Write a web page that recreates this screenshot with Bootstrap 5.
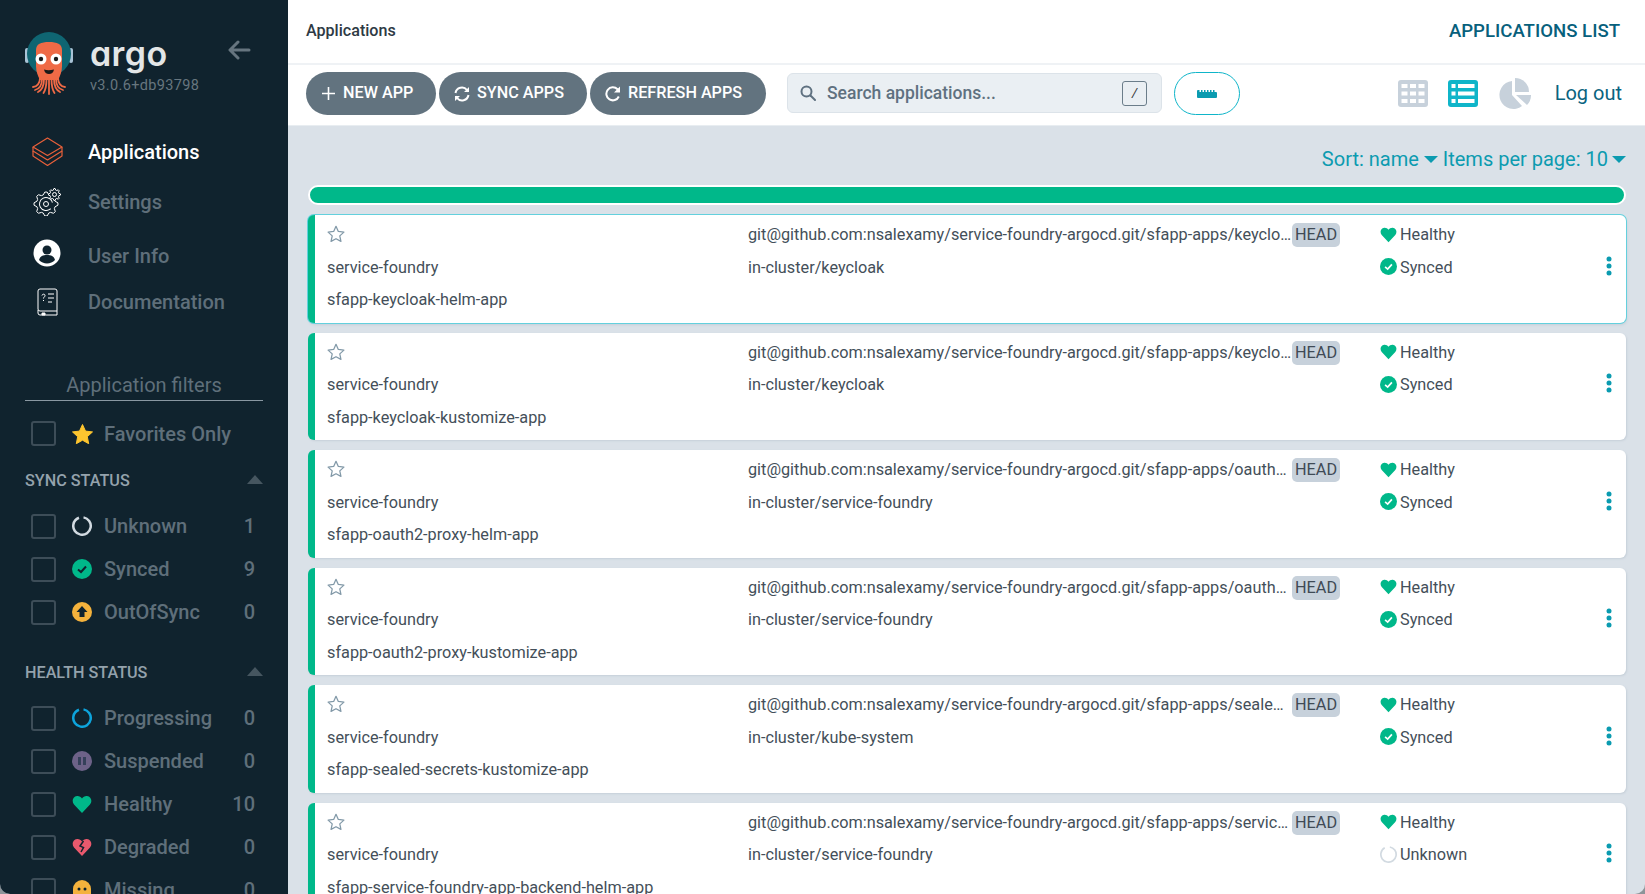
<!DOCTYPE html>
<html lang="en">
<head>
  <meta charset="UTF-8" />
  <title>Applications</title>
  <link href="https://cdn.jsdelivr.net/npm/bootstrap@5.3.0/dist/css/bootstrap.min.css" rel="stylesheet">
  <style>
    html, body { height: 100%; overflow: hidden; background: #8d9499; }
    body { font-family: Roboto, "Liberation Sans", sans-serif; color: #444f59; }
    .app { height: 894px; border-radius: 0 0 10px 10px; overflow: hidden; background: #dae1e8; }

    /* sidebar */
    .side { width: 288px; background: #10232e; padding-left: 25px; padding-right: 25px; }
    .brand { height: 127px; padding-top: 32px; }
    .wordmark { font-family: Inter, sans-serif; font-feature-settings: "cv11"; font-weight: 600; font-size: 34px; line-height: 34px; color: #e3e6e7; margin-top: 5px; height: 40px; letter-spacing: .4px; }
    .version { font-size: 14.5px; line-height: 18px; color: #67767f; letter-spacing: .35px; }
    .brand-text { margin-left: 17px; }
    .back { margin-left: 29px; margin-top: 8px; }
    .side-link { height: 50px; font-size: 20px; font-weight: 500; color: #5f6f7a; }
    .side-link.active { color: #fff; }
    .side-link .ico { width: 44px; margin-right: 19px; }
    .side-link.shift-down { margin-top: 4px; }
    .side-link.shift-down svg { margin-bottom: 6px; }
    .side-link.shift-up { margin-top: -4px; }
    .filters-title { margin-top: 39px; height: 35px; font-size: 20px; line-height: 38px; color: #5f6f7a; border-bottom: 1px solid #8a98a2; text-align: center; }
    .filter-head { height: 24px; font-size: 16.2px; font-weight: 500; color: #94a2ac; }
    .filter-head svg { margin-bottom: 3px; }
    .filter-row { height: 43px; font-size: 20px; font-weight: 500; color: #5f6f7a; padding-left: 6px; padding-right: 8px; }
    .filter-row .form-check-input { width: 25px; height: 25px; margin: 0 16px 0 0; background-color: transparent; border: 2px solid #3d4d58; border-radius: 3px; flex: none; }
    .filter-row svg { margin-right: 12px; flex: none; }
    #fav-row svg { margin-right: 11px; }
    #fav-row { margin-top: 11px; }
    #sync-head { margin-top: 14px; }
    #sync-rows, #health-rows { margin-top: 11.5px; }
    #health-head { margin-top: 27.5px; }

    /* header */
    .topbar { height: 65px; background: #fff; border-bottom: 2px solid #eff2f5; padding: 0 25px 0 18px; }
    .crumb { font-size: 16.1px; font-weight: 500; color: #2e3a44; }
    .page-name { font-size: 18.6px; font-weight: 500; color: #07607c; }
    .toolbar { height: 61px; background: #fff; border-bottom: 1px solid #e8edf1; padding: 0 23px 4px 18px; }
    .btn-argo { height: 43px; border-radius: 22px; border: 0; background: #62737f; color: #fff; font-size: 16.2px; font-weight: 500; padding: 0 0 0 15px; margin-right: 3px; text-align: left; white-space: nowrap; flex: none; }
    .btn-argo:hover { background: #62737f; color: #fff; }
    .btn-argo svg { margin-right: 7px; }
    .btn-argo.new { width: 130px; }
    .btn-argo.sync { width: 148px; }
    .btn-argo.refresh { width: 176px; margin-right: 0; }
    .search { width: 375px; height: 40px; margin-left: 21px; background: #eaeff3; border: 1px solid #dce3e9; border-radius: 6px; padding: 0 14px 0 12px; flex: none; }
    .search .form-control { background: transparent; border: 0; box-shadow: none; padding: 0 0 0 11px; font-size: 17.5px; font-weight: 500; color: #5f7180; }
    .search .form-control::placeholder { color: #5f7180; opacity: 1; }
    .key { width: 25px; height: 25px; border: 1px solid #6b7d8a; border-radius: 3px; font-size: 13px; font-style: italic; color: #333; flex: none; }
    .btn-ruler { width: 66px; height: 43px; margin-left: 12px; border: 1px solid #0fb5c9; border-radius: 22px; background: #fff; padding: 0; flex: none; }
    .view-ico { margin-right: 20px; }
    .logout { font-size: 20px; color: #0a6480; margin-left: 24px; }

    /* list */
    .content { padding: 0 19px 0 20px; }
    .sorter { height: 59px; padding-top: 21px; font-size: 20px; line-height: 24px; color: #0c9bb0; }
    .caret { display: inline-block; border: 7px solid transparent; border-top-color: #0c9bb0; border-bottom-width: 0; vertical-align: 3px; margin: 0 0 0 5px; }
    .caret.last { margin-left: 4px; }
    .bar { height: 20px; background: #00b88a; border: 2px solid #fff; border-radius: 10px; margin-bottom: 10px; }
    .app-card { height: 107.5px; margin-bottom: 10px; background: #fff; border: 0; border-left: 7px solid #00b88a; border-radius: 6px; box-shadow: 1px 1px 2px #c6d0d9; padding: 4px 0 0 12px; font-size: 16.25px; color: #444f59; }
    .app-card.selected { box-shadow: 0 0 0 1px #63d0dd, 1px 2px 3px #c6d0d9; }
    .app-line { height: 32.5px; }
    .col-name { width: 421px; flex: none; }
    .col-name svg { margin-bottom: 2px; }
    .col-repo { width: 632px; flex: none; }
    .repo-text { width: 544px; flex: none; }
    .chip { background: #c7d1db; border-radius: 5px; padding: 0 3px; height: 24px; line-height: 24px; flex: none; color: #3f4a55; }
    .col-state svg { margin-right: 3px; margin-bottom: 2px; flex: none; }
    .kebab { right: 14px; top: 38px; }
  </style>
</head>
<body>
  <div class="app d-flex">
    <aside class="side flex-shrink-0">
      <div class="brand d-flex">
        <svg width="48" height="64" viewBox="0 0 48 64" class="flex-shrink-0">
          <rect x="0" y="16" width="4" height="15" rx="2" fill="#a9c3d6"/>
          <rect x="44" y="16" width="4" height="15" rx="2" fill="#a9c3d6"/>
          <circle cx="24" cy="22" r="22" fill="#0f6572"/>
          <path d="M11 34V18C11 12 16 10 24 10s13 2 13 8v16c0 6-2 10-4 14H15c-2-4-4-8-4-14z" fill="#ef6a46"/>
          <g fill="none" stroke="#ef6a46" stroke-width="1.800" stroke-linecap="round">
            <path d="M15 46c0 5-3 9-7 9"/><path d="M17 47c0 6-3 10-7 11"/><path d="M19 47c0 7-2 11-6 13"/><path d="M21.500 47c0 7-1 11-3 14"/>
            <path d="M33 46c0 5 3 9 7 9"/><path d="M31 47c0 6 3 10 7 11"/><path d="M29 47c0 7 2 11 6 13"/><path d="M26.500 47c0 7 1 11 3 14"/>
            <path d="M24 47v15"/>
          </g>
          <circle cx="16" cy="27" r="5.500" fill="#fff"/><circle cx="31" cy="27" r="5.500" fill="#fff"/>
          <circle cx="16" cy="27" r="2.200" fill="#1a1a1a"/><circle cx="31" cy="27" r="2.200" fill="#1a1a1a"/>
          <path d="M19 37.500c3 1 6 1 10 0-.5 3-2.500 4.500-5 4.500s-4.500-1.500-5-4.500z" fill="#1a1a1a"/>
        </svg>
        <div class="brand-text">
          <div class="wordmark">argo</div>
          <div class="version">v3.0.6+db93798</div>
        </div>
        <svg class="back flex-shrink-0" width="23" height="20" viewBox="0 0 23 20" fill="none" stroke="#66757f" stroke-width="3" stroke-linecap="round" stroke-linejoin="round"><path d="M21 10H3M10 2l-8 8 8 8"/></svg>
      </div>

      <div class="side-link active d-flex align-items-center">
        <span class="ico d-flex justify-content-center"><svg width="31" height="30" viewBox="0 0 31 30" fill="none" stroke="#e9603a" stroke-width="1.200" stroke-linejoin="round"><path d="M15.500 1 30 10 15.500 18.500 1 10z"/><path d="M1 10v4l14.500 9L30 14v-4"/><path d="M1 14v5l14.500 9.500L30 19v-5"/></svg></span>
        Applications
      </div>
      <div class="side-link d-flex align-items-center">
        <span class="ico d-flex justify-content-center"><svg width="29" height="28" viewBox="0 0 29 28" fill="none" stroke="#fff" stroke-width="1"><path id="gear-big"/><circle cx="13" cy="16" r="6.500" stroke-dasharray="22 6" transform="rotate(150 13 16)"/><circle cx="13" cy="16" r="2.500"/><path id="gear-small" fill="#10232e"/><circle cx="21.500" cy="6.500" r="2"/></svg></span>
        Settings
      </div>
      <div class="side-link shift-down d-flex align-items-center">
        <span class="ico d-flex justify-content-center"><svg width="28" height="28" viewBox="0 0 28 28"><circle cx="14" cy="14" r="13.500" fill="#fff"/><circle cx="14" cy="11" r="4.500" fill="#10232e"/><path d="M6 21c1-4 4-5 8-5s7 1 8 5c-2 2-5 3.500-8 3.500S8 23 6 21z" fill="#10232e"/></svg></span>
        User Info
      </div>
      <div class="side-link shift-up d-flex align-items-center">
        <span class="ico d-flex justify-content-center"><svg width="21" height="28" viewBox="0 0 21 28" fill="none" stroke="#fff" stroke-width="1"><path d="M3 1h15a2 2 0 0 1 2 2v20H3a2 2 0 0 1-2-2V3a2 2 0 0 1 2-2z"/><path d="M1 22v3a2 2 0 0 0 2 2h17v-4"/><path d="M5 25h3v2H5z" fill="#fff"/><path d="M5 7.500c0-1.500 3-2 3 0 0 1.500-1.500 1.500-1.500 3M6.500 12v1M11 6h6M11 10h6M11 14h4"/></svg></span>
        Documentation
      </div>

      <div class="filters-title">Application filters</div>
      <div class="filter-row d-flex align-items-center" id="fav-row">
        <input class="form-check-input" type="checkbox" aria-label="Favorites Only">
        <svg width="21" height="20" viewBox="0 0 21 20"><path d="M10.500 .5l3 6.600 7 .8-5.200 4.800 1.400 7-6.200-3.500-6.200 3.500 1.400-7L.5 7.900l7-.8z" fill="#fdc52f" stroke="#fdc52f" stroke-linejoin="round"/></svg>
        <span>Favorites Only</span>
      </div>
      <div class="filter-head d-flex justify-content-between align-items-center" id="sync-head">SYNC STATUS <svg width="16" height="9" viewBox="0 0 16 9"><path d="M8 0 16 9H0z" fill="#465660"/></svg></div>
      <div id="sync-rows"></div>
      <div class="filter-head d-flex justify-content-between align-items-center" id="health-head">HEALTH STATUS <svg width="16" height="9" viewBox="0 0 16 9"><path d="M8 0 16 9H0z" fill="#465660"/></svg></div>
      <div id="health-rows"></div>
    </aside>

    <main class="flex-grow-1 d-flex flex-column">
      <div class="topbar d-flex justify-content-between align-items-center flex-shrink-0">
        <span class="crumb">Applications</span>
        <span class="page-name">APPLICATIONS LIST</span>
      </div>
      <div class="toolbar d-flex align-items-center flex-shrink-0">
        <button class="btn btn-argo new" type="button"><svg width="15" height="15" viewBox="0 0 15 15" stroke="#fff" stroke-width="1.600"><path d="M7.500 1v13M1 7.500h13"/></svg>NEW APP</button>
        <button class="btn btn-argo sync" type="button"><svg width="16" height="16" viewBox="0 0 16 16" fill="none" stroke="#fff" stroke-width="2"><path d="M1.500 7a6.500 6.500 0 0 1 11.500-3l1.500 1.500M14.500 9A6.500 6.500 0 0 1 3 12l-1.500-1.500"/><path d="M15 1v5h-5M1 15v-5h5" fill="#fff" stroke="none"/></svg>SYNC APPS</button>
        <button class="btn btn-argo refresh" type="button"><svg width="16" height="16" viewBox="0 0 16 16" fill="none" stroke="#fff" stroke-width="2"><path d="M13.800 10.500A6.500 6.500 0 1 1 12.500 3.300L14 5"/><path d="M15 .5V6.500H9z" fill="#fff" stroke="none"/></svg>REFRESH APPS</button>
        <div class="search d-flex align-items-center">
          <svg width="16" height="16" viewBox="0 0 16 16" class="flex-shrink-0" fill="none" stroke="#5f7180" stroke-width="2"><circle cx="6.500" cy="6.500" r="5"/><path d="M10.500 10.500 15 15" stroke-linecap="round"/></svg>
          <input class="form-control" type="text" placeholder="Search applications...">
          <span class="key d-flex align-items-center justify-content-center">/</span>
        </div>
        <button class="btn btn-ruler" type="button" aria-label="Minimize"><svg width="20" height="8" viewBox="0 0 20 8"><path d="M1 0h1.500v2H4V0h1.500v2H7V0h1.500v2H10V0h1.500v2H13V0h1.500v2H16V0h1.500v2H19a1 1 0 0 1 1 1v4a1 1 0 0 1-1 1H1a1 1 0 0 1-1-1V1a1 1 0 0 1 1-1z" fill="#0a9bb0"/></svg></button>
        <div class="ms-auto d-flex align-items-center">
          <svg class="view-ico" width="30" height="27" viewBox="0 0 30 27"><rect width="30" height="27" rx="3" fill="#c7d1db"/><g fill="#fff"><rect x="3.500" y="4" width="6" height="4"/><rect x="12" y="4" width="6" height="4"/><rect x="20.500" y="4" width="6" height="4"/><rect x="3.500" y="11.500" width="6" height="4"/><rect x="12" y="11.500" width="6" height="4"/><rect x="20.500" y="11.500" width="6" height="4"/><rect x="3.500" y="19" width="6" height="4"/><rect x="12" y="19" width="6" height="4"/><rect x="20.500" y="19" width="6" height="4"/></g></svg>
          <svg class="view-ico" width="30" height="27" viewBox="0 0 30 27"><rect width="30" height="27" rx="3" fill="#0fb5c9"/><g fill="#fff"><rect x="3.500" y="4" width="4" height="4"/><rect x="10" y="4" width="16.500" height="4"/><rect x="3.500" y="11.500" width="4" height="4"/><rect x="10" y="11.500" width="16.500" height="4"/><rect x="3.500" y="19" width="4" height="4"/><rect x="10" y="19" width="16.500" height="4"/></g></svg>
          <svg width="33" height="31" viewBox="0 0 33 31"><path d="M14 3a14 14 0 1 0 10 25L14 17z" fill="#c7d1db"/><path d="M17 0a14 14 0 0 1 14 14H17z" fill="#c7d1db"/><path d="M18 17h15a14 14 0 0 1-4 10z" fill="#c7d1db"/></svg>
          <span class="logout">Log out</span>
        </div>
      </div>

      <div class="content flex-grow-1 overflow-hidden">
        <div class="sorter text-end">Sort: name<span class="caret"></span> Items per page: 10<span class="caret last"></span></div>
        <div class="bar"></div>
        <div id="cards"></div>
      </div>
    </main>
  </div>

  <script src="https://cdn.jsdelivr.net/npm/bootstrap@5.3.0/dist/js/bootstrap.bundle.min.js"></script>
  <script>
    const heart = (c, s) => `<svg width="${s}" height="${s}" viewBox="0 0 20 20"><path d="M10 19 2 10.500C-.5 7.500.5 2.500 5 2c2-.2 4 .8 5 2.500C11 2.800 13 1.800 15 2c4.500.5 5.500 5.500 3 8.500z" fill="${c}"/></svg>`;
    const check = (s, mark) => `<svg width="${s}" height="${s}" viewBox="0 0 20 20"><circle cx="10" cy="10" r="10" fill="#00b88a"/><path d="M6 10.500l3 2.500 5-5.500" fill="none" stroke="${mark}" stroke-width="2"/></svg>`;
    const ring = (c, s, sw) => `<svg width="${s}" height="${s}" viewBox="0 0 20 20"><circle cx="10" cy="10" r="${10 - sw / 2}" fill="none" stroke="${c}" stroke-width="${sw}" stroke-dasharray="50 8" transform="rotate(-80 10 10)"/></svg>`;
    const ICONS = {
      unknown: ring("#d2dae1", 20, 2.500),
      synced: check(20, "#10232e"),
      outofsync: `<svg width="20" height="20" viewBox="0 0 20 20"><circle cx="10" cy="10" r="10" fill="#f4b23c"/><path d="M10 4l5.500 6h-3v5h-5v-5h-3z" fill="#10232e"/></svg>`,
      progressing: ring("#0da4dc", 20, 2.500),
      suspended: `<svg width="20" height="20" viewBox="0 0 20 20"><circle cx="10" cy="10" r="10" fill="#6d6288"/><rect x="6" y="6" width="3" height="8" fill="#35405a"/><rect x="11" y="6" width="3" height="8" fill="#35405a"/></svg>`,
      healthy: heart("#00b88a", 20),
      degraded: `<svg width="20" height="20" viewBox="0 0 20 20"><path d="M10 19 2 10.500C-.5 7.500.5 2.500 5 2c2-.2 4 .8 5 2.500C11 2.800 13 1.800 15 2c4.500.5 5.500 5.500 3 8.500z" fill="#e9596d"/><path d="M11.500 4 8 9l3.500 1.500L9 15" fill="none" stroke="#10232e" stroke-width="1.500"/></svg>`,
      missing: `<svg width="20" height="20" viewBox="0 0 20 20"><path d="M1 20V9a9 9 0 0 1 18 0v11z" fill="#f4b23c"/><circle cx="7" cy="9" r="1.500" fill="#10232e"/><circle cx="13" cy="9" r="1.500" fill="#10232e"/></svg>`
    };

    const row = (label, icon, n) => `
      <div class="filter-row d-flex align-items-center">
        <input class="form-check-input" type="checkbox" aria-label="${label}">
        ${ICONS[icon]}
        <span class="flex-grow-1">${label}</span>
        <span>${n}</span>
      </div>`;
    document.getElementById("sync-rows").innerHTML =
      row("Unknown", "unknown", 1) + row("Synced", "synced", 9) + row("OutOfSync", "outofsync", 0);
    document.getElementById("health-rows").innerHTML =
      row("Progressing", "progressing", 0) + row("Suspended", "suspended", 0) + row("Healthy", "healthy", 10) + row("Degraded", "degraded", 0) + row("Missing", "missing", 0);

    // outline gears for the Settings icon
    function gear(cx, cy, r1, r2, teeth) {
      let d = "";
      const step = Math.PI * 2 / (teeth * 4);
      for (let i = 0; i < teeth * 4; i++) {
        const r = (i % 4 < 2) ? r2 : r1;
        const a = i * step - step / 2;
        d += (i ? "L" : "M") + (cx + r * Math.cos(a)).toFixed(2) + " " + (cy + r * Math.sin(a)).toFixed(2);
      }
      return d + "z";
    }
    document.getElementById("gear-big").setAttribute("d", gear(13, 16, 9.5, 12, 8));
    document.getElementById("gear-small").setAttribute("d", gear(21.5, 6.5, 4.5, 6, 8));

    const REPO = "git@github.com:nsalexamy/service-foundry-argocd.git/sfapp-apps/";
    const apps = [
      { name: "sfapp-keycloak-helm-app", path: "keycloak/helm", dest: "in-cluster/keycloak", sync: "Synced", selected: true },
      { name: "sfapp-keycloak-kustomize-app", path: "keycloak/kustomize", dest: "in-cluster/keycloak", sync: "Synced" },
      { name: "sfapp-oauth2-proxy-helm-app", path: "oauth2-proxy/helm", dest: "in-cluster/service-foundry", sync: "Synced" },
      { name: "sfapp-oauth2-proxy-kustomize-app", path: "oauth2-proxy/kustomize", dest: "in-cluster/service-foundry", sync: "Synced" },
      { name: "sfapp-sealed-secrets-kustomize-app", path: "sealed-secrets/kustomize", dest: "in-cluster/kube-system", sync: "Synced" },
      { name: "sfapp-service-foundry-app-backend-helm-app", path: "service-foundry-app-backend/helm", dest: "in-cluster/service-foundry", sync: "Unknown" }
    ];
    const star = `<svg width="18" height="18" viewBox="0 0 20 20" fill="none" stroke="#8299a8" stroke-width="1.400" stroke-linejoin="round"><path d="M10 1.500l2.600 5.700 6.200.7-4.600 4.200 1.300 6.100L10 15.200l-5.500 3 1.300-6.100L1.200 7.900l6.200-.7z"/></svg>`;
    const kebab = `<svg width="6" height="20" viewBox="0 0 6 20" fill="#0a9bb0"><circle cx="3" cy="3" r="2.500"/><circle cx="3" cy="10" r="2.500"/><circle cx="3" cy="17" r="2.500"/></svg>`;

    const wrap = document.getElementById("cards");
    apps.forEach((app) => {
      const card = document.createElement("div");
      card.className = "app-card position-relative" + (app.selected ? " selected" : "");
      const syncIcon = app.sync === "Synced" ? check(17, "#fff") : ring("#d2dae1", 17, 2);
      card.innerHTML = `
        <div class="app-line d-flex align-items-center">
          <div class="col-name d-flex">${star}</div>
          <div class="col-repo d-flex align-items-center"><span class="repo-text text-truncate">${REPO}${app.path}</span><span class="chip">HEAD</span></div>
          <div class="col-state d-flex align-items-center">${heart("#00b88a", 17)}Healthy</div>
        </div>
        <div class="app-line d-flex align-items-center">
          <div class="col-name">service-foundry</div>
          <div class="col-repo">${app.dest}</div>
          <div class="col-state d-flex align-items-center">${syncIcon}${app.sync}</div>
        </div>
        <div class="app-line d-flex align-items-center">
          <div class="col-name text-nowrap">${app.name}</div>
        </div>
        <div class="kebab position-absolute">${kebab}</div>`;
      wrap.appendChild(card);
    });
  </script>
</body>
</html>
